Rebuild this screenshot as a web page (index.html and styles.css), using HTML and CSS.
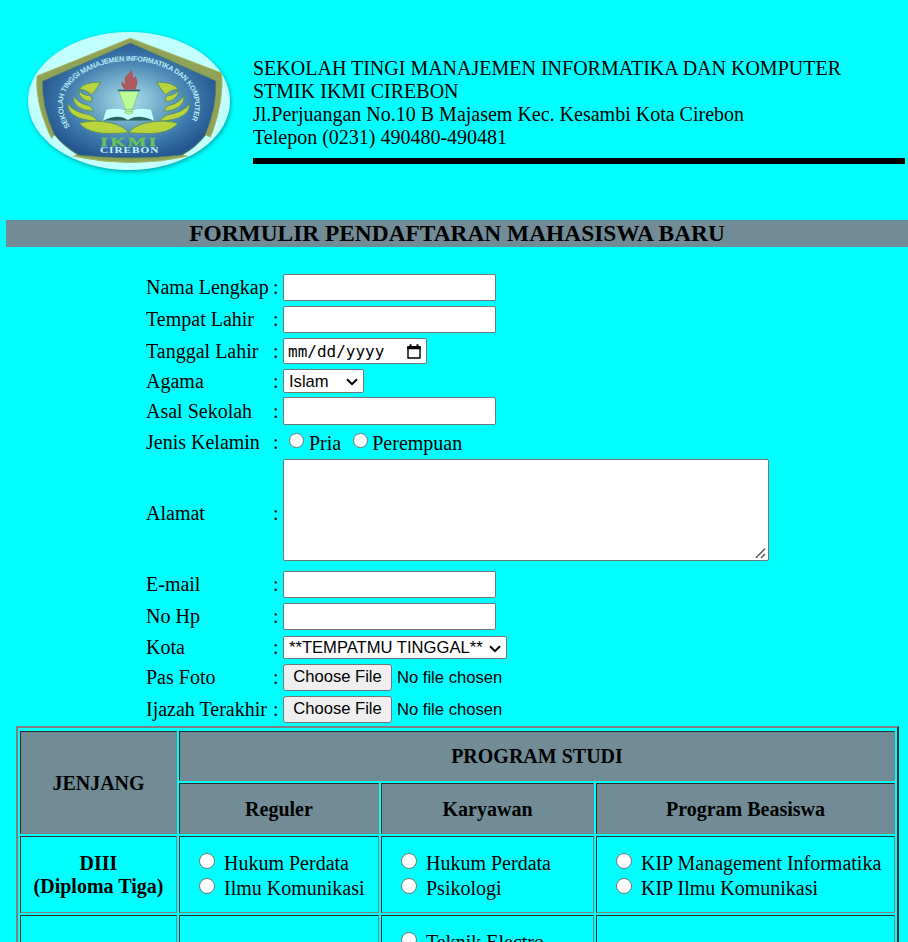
FILE: index.html
```html
<!DOCTYPE html>
<html lang="id">
<head>
<meta charset="utf-8">
<title>Formulir Pendaftaran Mahasiswa Baru</title>
<link rel="stylesheet" href="styles.css">
</head>
<body>
<header class="head">
  <svg class="logo" viewBox="0 0 690 495">
    <defs>
      <radialGradient id="sky" cx="50%" cy="50%" r="53%">
        <stop offset="0" stop-color="#a9e0e8"/><stop offset=".35" stop-color="#75aecb"/><stop offset=".72" stop-color="#3b77aa"/><stop offset="1" stop-color="#24568f"/>
      </radialGradient>
      <clipPath id="oval"><ellipse cx="342" cy="243" rx="303" ry="207"/></clipPath>
      <path id="arc" d="M165 320 C128 262 140 205 195 167 Q262 123 343 123 Q430 123 495 170 C545 210 552 270 519 320"/>
    </defs>
    <ellipse class="oval" cx="342" cy="243" rx="303" ry="207"/>
    <g clip-path="url(#oval)">
      <path d="M346 55 L620 159 Q627 240 592 338 Q570 395 525 407 Q350 448 168 407 Q120 390 98 330 Q60 240 66 168Z" fill="#8fa258" stroke="#a4b85c" stroke-width="3"/>
      <path d="M346 69 L602 183 Q606 260 570 346 Q540 385 500 405 Q350 422 191 405 Q145 378 118 343 Q80 260 83 184Z" fill="url(#sky)" stroke="#477b68" stroke-width="2"/>
      <path d="M118 346 Q145 380 185 404 L168 410 L100 370Z M573 346 Q542 385 505 404 L525 410 L600 360Z" fill="#c2ffff"/>
    </g>
    <text class="ring"><textPath href="#arc" textLength="640" lengthAdjust="spacing">SEKOLAH TINGGI MANAJEMEN INFORMATIKA DAN KOMPUTER</textPath></text>
    <g id="wing" fill="#b9d43d" stroke="#4e8b60" stroke-width="2.5" stroke-linejoin="round">
      <path d="M257 186 Q207 186 193 207 Q214 209 230 224 Q246 209 257 186Z"/>
      <path d="M190 209 Q199 225 228 228 Q232 237 230 245 Q194 243 190 209Z"/>
      <path d="M174 224 Q184 248 222 257 Q233 263 235 274 Q173 270 174 224Z"/>
      <path d="M158 251 Q173 275 225 285 Q242 291 248 304 Q157 298 158 251Z"/>
      <path d="M193 309 Q240 298 286 308 Q324 316 341 338 Q280 343 248 338 Q209 331 193 309Z"/>
    </g>
    <use href="#wing" transform="matrix(-1 0 0 1 682 0)"/>
    <path d="M264 302 L274 269 Q321 261 341 278 Q361 261 408 269 L417 302Z" fill="#c2ffff"/>
    <path d="M264 302 Q310 279 339 300 Q368 279 417 302Z" fill="#276566"/>
    <path d="M312 214 H371 L353 267 V279 Q342 286 331 279 V267Z" fill="#bcfb96" stroke="#7fc078" stroke-width="2"/>
    <path d="M331 268 H353 M333 275 H352" stroke="#72ae75" stroke-width="2"/>
    <path d="M308 211 H375" stroke="#26617e" stroke-width="5"/>
    <path d="M329 209 Q315 194 321 183 Q326 192 330 190 Q326 169 339 163 Q347 158 347 149 Q356 158 354 173 Q359 174 362 168 Q372 187 361 209Z" fill="#ad575e"/>
    <text class="ikmi" x="256" y="378" textLength="176" lengthAdjust="spacingAndGlyphs">IKMI</text>
    <text class="cirebon" x="255" y="399" textLength="178" lengthAdjust="spacingAndGlyphs">CIREBON</text>
  </svg>
  <div class="school">
    <div>SEKOLAH TINGI MANAJEMEN INFORMATIKA DAN KOMPUTER</div>
    <div>STMIK IKMI CIREBON</div>
    <div>Jl.Perjuangan No.10 B Majasem Kec. Kesambi Kota Cirebon</div>
    <div>Telepon (0231) 490480-490481</div>
  </div>
</header>
<h1>FORMULIR PENDAFTARAN MAHASISWA BARU</h1>
<form class="form">
  <label>Nama Lengkap</label><i>:</i><input class="line">
  <label>Tempat Lahir</label><i>:</i><input class="line">
  <label>Tanggal Lahir</label><i>:</i>
  <div class="date"><span>mm/dd/yyyy</span><svg width="14" height="15" viewBox="0 0 14 15"><path d="M1 3h12v11H1z" fill="none" stroke="#000" stroke-width="1.4"/><path d="M.3 2.2h13.4v3H.3zM2.5.3h2V3h-2zM9.5.3h2V3h-2z"/></svg></div>
  <label>Agama</label><i>:</i>
  <div class="pick agama"><select><option>Islam</option></select><svg width="12" height="8" viewBox="0 0 12 8"><path d="M1 1.2L6 6.2L11 1.2"/></svg></div>
  <label>Asal Sekolah</label><i>:</i><input class="line tall">
  <label>Jenis Kelamin</label><i>:</i>
  <div class="sex"><input type="radio" name="jk"><span>Pria</span><input type="radio" name="jk"><span>Perempuan</span></div>
  <label>Alamat</label><i>:</i>
  <div class="area"><textarea></textarea><svg width="11" height="11" viewBox="0 0 11 11"><path d="M.8 10L10 .8M6 10L10 6"/></svg></div>
  <label>E-mail</label><i>:</i><input class="line">
  <label>No Hp</label><i>:</i><input class="line">
  <label>Kota</label><i>:</i>
  <div class="pick kota"><select><option>**TEMPATMU TINGGAL**</option></select><svg width="12" height="8" viewBox="0 0 12 8"><path d="M1 1.2L6 6.2L11 1.2"/></svg></div>
  <label>Pas Foto</label><i>:</i><div class="file"><button type="button">Choose File</button><span>No file chosen</span></div>
  <label>Ijazah Terakhir</label><i>:</i><div class="file"><button type="button">Choose File</button><span>No file chosen</span></div>
</form>
<section class="study">
  <div class="cell th level">JENJANG</div>
  <div class="cell th program">PROGRAM STUDI</div>
  <div class="cell th">Reguler</div>
  <div class="cell th">Karyawan</div>
  <div class="cell th">Program Beasiswa</div>
  <div class="cell name">DIII<br>(Diploma Tiga)</div>
  <div class="cell opts"><p><input type="radio" name="p"><span>Hukum Perdata</span></p><p><input type="radio" name="p"><span>Ilmu Komunikasi</span></p></div>
  <div class="cell opts"><p><input type="radio" name="p"><span>Hukum Perdata</span></p><p><input type="radio" name="p"><span>Psikologi</span></p></div>
  <div class="cell opts"><p><input type="radio" name="p"><span>KIP Management Informatika</span></p><p><input type="radio" name="p"><span>KIP Ilmu Komunikasi</span></p></div>
  <div class="cell"></div>
  <div class="cell"></div>
  <div class="cell opts"><p><input type="radio" name="p"><span>Teknik Electro</span></p></div>
  <div class="cell"></div>
</section>
</body>
</html>
```
FILE: styles.css
```css
* { box-sizing: border-box; }
html { overflow: hidden; }
body {
  margin: 0;
  height: 942px;
  overflow: hidden;
  background: #00ffff;
  color: #000;
  font: 20px/23px "Liberation Serif", serif;
}
.head { display: flex; height: 220px; padding: 20px 3px 0 15px; }
.logo { width: 230px; height: 165px; flex: none; overflow: visible; }
.oval { fill: #c2ffff; filter: drop-shadow(3px 5px 6px rgba(0, 60, 70, .45)); }
.ring { font: bold 22px "Liberation Sans", sans-serif; fill: #b4e9f3; }
.ikmi { font: bold 37px "Liberation Serif", serif; letter-spacing: 5px; fill: #68c35c; stroke: #68c35c; }
.cirebon { font: bold 25px "Liberation Serif", serif; letter-spacing: 2px; fill: #c2f3fa; }
.school { flex: 1; margin: 36px 0 0 8px; padding-top: 1px; height: 108px; border-bottom: 6px solid #000; white-space: nowrap; }
h1 {
  margin: 0 0 24px 6px;
  height: 27px;
  background: #718c97;
  font-size: 23.4px;
  line-height: 27px;
  text-align: center;
  white-space: nowrap;
}
.form {
  display: grid;
  grid-template-columns: 127px 10px 486px;
  grid-template-rows: 33px 31px 32px 28px 32px 30px 112px 31px 33px 29px 31px 33px;
  align-items: center;
  margin-left: 146px;
  white-space: nowrap;
}
.form i { font-style: normal; }
.line, .date, select, textarea, button { border: 1px solid #767676; border-radius: 2px; background: #fff; margin: 0; color: #000; }
.line { width: 213px; height: 27px; }
.tall { height: 28px; }
.date { display: flex; align-items: center; justify-content: space-between; width: 144px; height: 26px; padding: 0 5px 0 4px; font: 16px "DejaVu Sans Mono", monospace; }
.pick { position: relative; }
.pick select { appearance: none; display: block; width: 100%; height: 100%; padding: 0 5px; font: 16.6px "Liberation Sans", sans-serif; }
.pick svg { position: absolute; right: 6px; top: 50%; margin-top: -3px; fill: none; stroke: #000; stroke-width: 2; }
.agama { width: 81px; height: 24px; }
.kota { width: 224px; height: 23px; }
.sex { display: flex; align-items: center; }
input[type="radio"] { appearance: none; flex: none; width: 16px; height: 16px; margin: 0; border: 1px solid #767676; border-radius: 50%; background: #fff; }
.sex input[type="radio"] { width: 15px; height: 15px; margin: -3px 5px 0 6px; }
.sex span { margin-top: 2px; }
.sex span + input[type="radio"] { margin-left: 12px; margin-right: 4px; }
.area { position: relative; align-self: start; width: 486px; height: 102px; margin-top: 2px; }
textarea { display: block; width: 100%; height: 100%; resize: none; }
.area svg { position: absolute; right: 3px; bottom: 2px; fill: none; stroke: #555; stroke-width: 1.5; }
.file { display: flex; align-items: center; gap: 5px; font: 16.6px "Liberation Sans", sans-serif; }
button { width: 109px; height: 27px; padding: 0 0 2px; background: #efefef; border-radius: 3px; font: inherit; }
.study {
  display: grid;
  grid-template-columns: 157px 200px 213px 299px;
  grid-template-rows: 50px 51px 77px 77px;
  gap: 2px;
  width: 883px;
  margin-left: 16px;
  padding: 3px 2px 2px;
  border: 2px solid;
  border-color: #808080 #2c2c2c #2c2c2c #808080;
  white-space: nowrap;
}
.cell { border: 1px solid; border-color: #2c2c2c #808080 #808080 #2c2c2c; }
.th { display: flex; align-items: center; justify-content: center; padding-top: 1px; background: #718c97; font-weight: bold; }
.level { grid-row: span 2; }
.program { grid-column: span 3; }
.name { font-weight: bold; text-align: center; padding-top: 15px; }
.opts { padding: 14px 0 0 19px; }
.opts p { display: flex; align-items: center; height: 25px; margin: 0; }
.opts input[type="radio"] { margin: -5px 9px 0 0; }
```
